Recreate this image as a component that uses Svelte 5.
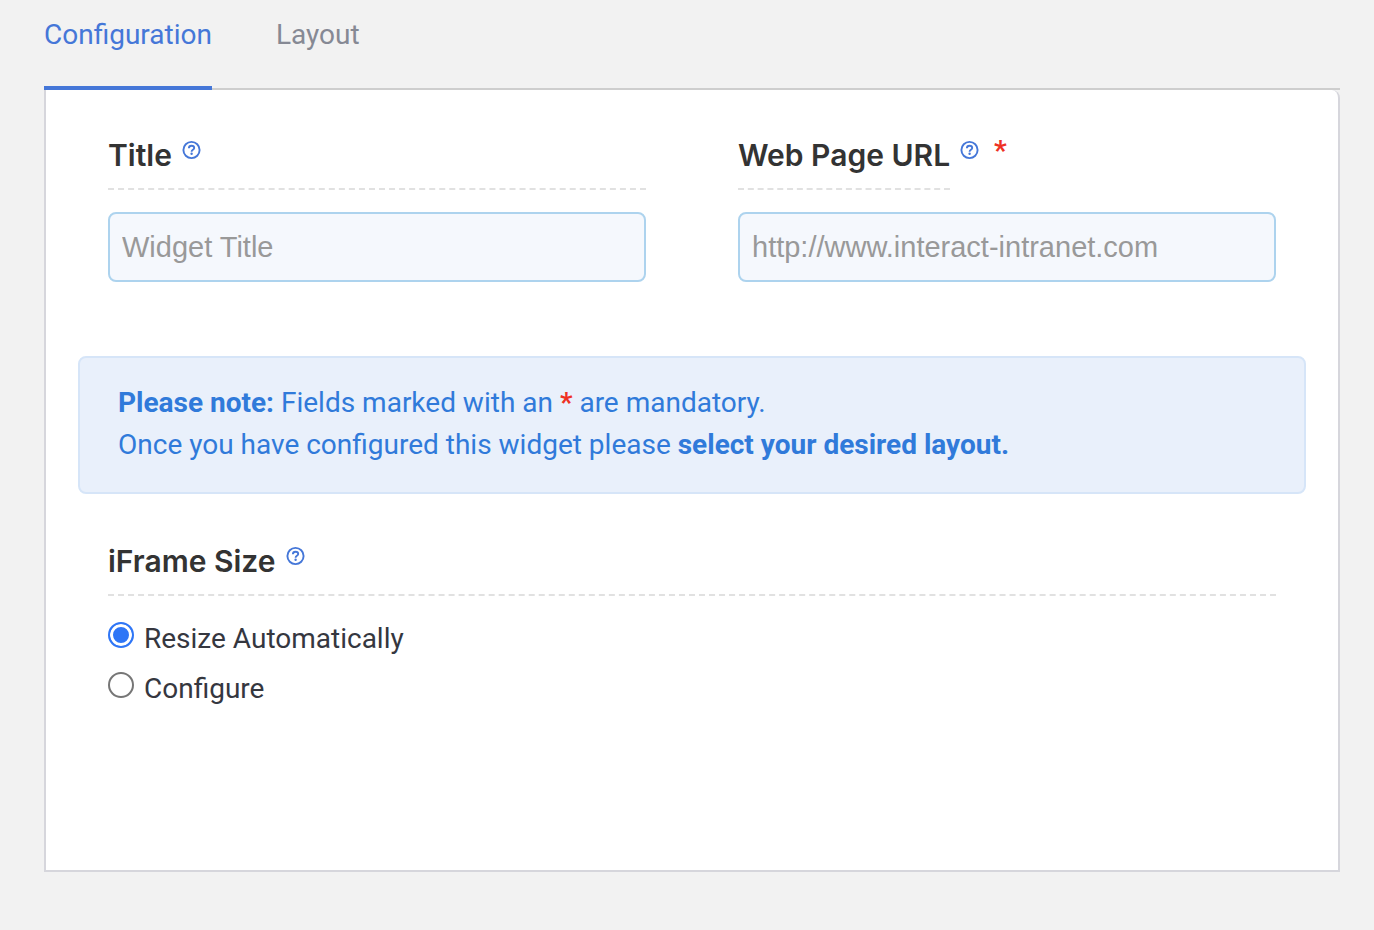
<script lang="ts">
	type Tab = 'configuration' | 'layout';

	const tabs: { id: Tab; label: string }[] = [
		{ id: 'configuration', label: 'Configuration' },
		{ id: 'layout', label: 'Layout' }
	];

	let active = $state<Tab>('configuration');
	let title = $state('');
	let url = $state('');
	let size = $state('auto');
</script>

{#snippet help(label: string)}
	<button type="button" class="help" aria-label={label}>
		<svg width="20" height="20" viewBox="0 0 20 20" fill="none" aria-hidden="true">
			<circle cx="9.5" cy="10" r="8.1" stroke="currentColor" stroke-width="1.9" />
			<path d="M6.9 8.2C6.9 6.6 8 5.7 9.5 5.7C11 5.7 12.2 6.6 12.2 8C12.2 9.8 9.6 9.8 9.6 11.7" stroke="currentColor" stroke-width="1.9" />
			<circle cx="9.6" cy="13.8" r="1.2" fill="currentColor" />
		</svg>
	</button>
{/snippet}

<main class="widget-settings">
	<nav class="tabs">
		{#each tabs as tab (tab.id)}
			<button type="button" class="tab" class:active={active === tab.id} onclick={() => (active = tab.id)}>
				{tab.label}
			</button>
		{/each}
	</nav>

	<form class="panel">
		<div class="fields">
			<div class="field">
				<div class="heading underlined">
					<label for="title">Title</label>
					{@render help('About the title')}
				</div>
				<input id="title" class="text" type="text" placeholder="Widget Title" bind:value={title} />
			</div>
			<div class="field">
				<div class="heading">
					<label class="underlined" for="url">Web Page URL</label>
					{@render help('About the web page URL')}
					<span class="required mark">*</span>
				</div>
				<input id="url" class="text" type="url" placeholder="http://www.interact-intranet.com" required bind:value={url} />
			</div>
		</div>

		<div class="note">
			<p><strong>Please note:</strong> Fields marked with an <span class="required">*</span> are mandatory.</p>
			<p>Once you have configured this widget please <strong>select your desired layout.</strong></p>
		</div>

		<div class="size" role="radiogroup" aria-labelledby="size-heading">
			<div class="heading underlined">
				<span id="size-heading">iFrame Size</span>
				{@render help('About the iFrame size')}
			</div>
			<div class="options">
				<label class="option">
					<input type="radio" name="size" value="auto" bind:group={size} />
					<span>Resize Automatically</span>
				</label>
				<label class="option">
					<input type="radio" name="size" value="configure" bind:group={size} />
					<span>Configure</span>
				</label>
			</div>
		</div>
	</form>
</main>

<style>
	:global(body) {
		background: #f2f2f2;
	}

	.widget-settings {
		padding: 0 34px 58px 44px;
		font-family: Roboto, 'Liberation Sans', sans-serif;
		font-size: 28px;
		color: #35373f;
	}

	.tabs {
		display: flex;
		gap: 64px;
		border-bottom: 2px solid #cecece;
	}

	.tab {
		margin-bottom: -2px;
		padding: 14px 0 30px;
		border: 0;
		border-bottom: 4px solid transparent;
		background: none;
		font: inherit;
		line-height: 42px;
		color: #868994;
		cursor: pointer;
	}

	.tab.active {
		border-color: #4577d8;
		color: #4577d8;
	}

	.panel {
		box-sizing: border-box;
		min-height: 782px;
		padding: 40px 32px;
		border: 2px solid #d6d6dc;
		border-top: 0;
		border-radius: 0 8px 0 0;
		background: #fff;
	}

	.fields {
		display: grid;
		grid-template-columns: 1fr 1fr;
		gap: 92px;
		padding: 0 30px;
	}

	.heading {
		display: flex;
		align-items: flex-start;
		gap: 10px;
		margin-bottom: 22px;
		font-family: Inter, 'Liberation Sans', sans-serif;
		font-size: 30px;
		font-weight: 600;
		line-height: 50px;
		color: #333;
	}

	.underlined {
		padding-bottom: 8px;
		border-bottom: 2px dashed #e1e1e1;
	}

	.help {
		display: flex;
		margin-top: 10px;
		padding: 0;
		border: 0;
		background: none;
		color: #4577d8;
		cursor: pointer;
	}

	.required {
		color: #ee3124;
		font-weight: 600;
	}

	.mark {
		margin-left: 4px;
		font-family: Roboto, sans-serif;
		font-size: 28px;
		font-weight: 700;
		line-height: 42px;
	}

	.text {
		box-sizing: border-box;
		width: 100%;
		height: 70px;
		padding: 0 12px;
		border: 2px solid #add3ee;
		border-radius: 8px;
		background: #f5f8fd;
		font-family: 'Liberation Sans', Arial, sans-serif;
		font-size: 29px;
		color: #333;
	}

	.text::placeholder {
		color: #999;
	}

	.note {
		margin-top: 74px;
		padding: 24px 38px 26px;
		border: 2px solid #d6e5f8;
		border-radius: 8px;
		background: #e9f0fb;
		line-height: 42px;
		color: #307ada;
	}

	.note p {
		margin: 0;
	}

	.size {
		margin-top: 42px;
		padding: 0 30px;
	}

	.options {
		display: flex;
		flex-direction: column;
		gap: 8px;
	}

	.option {
		display: flex;
		align-items: flex-start;
		gap: 10px;
		line-height: 42px;
	}

	.option input {
		appearance: none;
		box-sizing: border-box;
		width: 26px;
		height: 26px;
		margin: 4px 0 0;
		border: 2px solid #767676;
		border-radius: 50%;
		background: #fff;
	}

	.option input:checked {
		border-color: #2f76f6;
		background: #2f76f6;
		box-shadow: inset 0 0 0 3px #fff;
	}
</style>
